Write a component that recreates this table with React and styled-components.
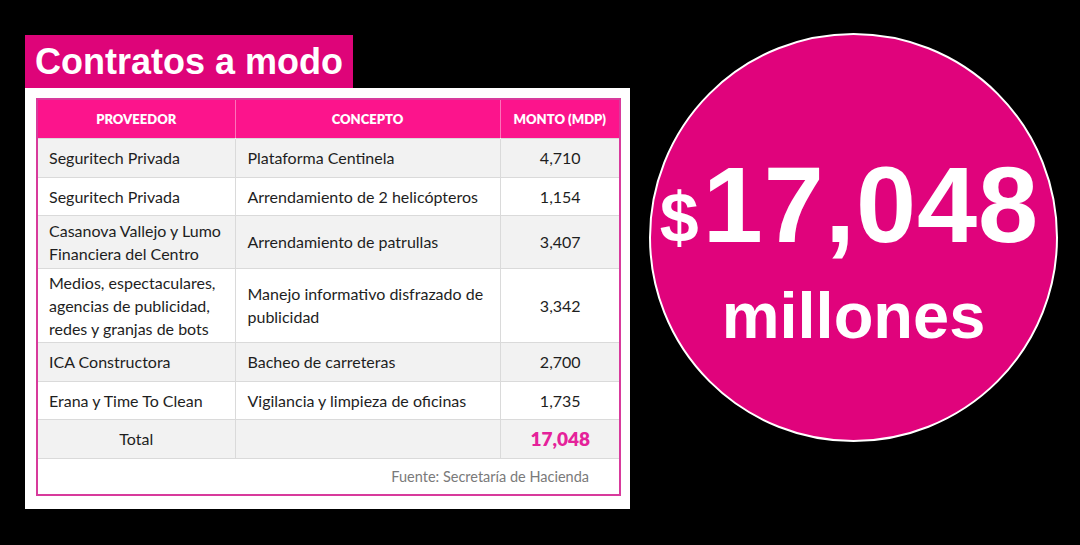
import React from 'react';
import styled, { createGlobalStyle } from 'styled-components';

const Global = createGlobalStyle`
  html, body { margin: 0; padding: 0; background: #000; }
  body { width: 1080px; height: 545px; overflow: hidden; }
`;

const Page = styled.div`
  display: flex;
  align-items: flex-start;
  gap: 19px;
  width: 1080px;
  height: 545px;
  box-sizing: border-box;
  padding: 33px 0 0 25px;
  background: #000;
`;

const LeftCol = styled.div`
  display: flex;
  flex-direction: column;
  align-items: flex-start;
  margin-top: 2px;
`;

const Title = styled.h1`
  margin: 0;
  height: 53px;
  padding: 1px 10px 0;
  box-sizing: border-box;
  background: #de0479;
  color: #fff;
  font: bold 36px/52px "Liberation Sans", Arial, sans-serif;
`;

const Card = styled.div`
  width: 605px;
  box-sizing: border-box;
  padding: 10px 9px 13px 11px;
  background: #fff;
`;

const Frame = styled.div`
  width: 585px;
  box-sizing: border-box;
  border: 2px solid #d83a9c;
`;

const Table = styled.table`
  width: 100%;
  border-collapse: collapse;
  table-layout: fixed;
  font-family: Lato, "Open Sans", sans-serif;
  font-size: 16px;
  color: #1e1e1e;
`;

const Row = styled.tr`
  height: ${(p) => p.h}px;
  background: ${(p) => (p.shade ? '#f2f2f2' : '#fff')};
`;

const Head = styled.th`
  background: #fc148c;
  color: #fff;
  font-weight: 800;
  font-size: 13px;
  text-align: center;
  padding: 0 6px;
  border-right: 1px solid rgba(255, 255, 255, 0.4);
  &:last-child { border-right: none; }
`;

const Cell = styled.td`
  padding: 2px 11px 2px 12px;
  line-height: 23px;
  white-space: nowrap;
  text-align: ${(p) => p.align || 'left'};
  vertical-align: middle;
  border: 1px solid #dadada;
  &:first-child { border-left: none; padding-left: 11px; }
  &:last-child { border-right: none; }
`;

const TotalValue = styled.span`
  color: #e5229a;
  font-weight: 800;
  font-size: 19px;
`;

const Source = styled.td`
  padding: 0 30px 0 0;
  text-align: right;
  color: #7a7a7a;
  font-size: 14.5px;
  border-top: 1px solid #dadada;
`;

const Circle = styled.div`
  width: 409px;
  height: 409px;
  box-sizing: border-box;
  border-radius: 50%;
  border: 2px solid #fff;
  background: #e0037c;
  color: #fff;
  display: flex;
  flex-direction: column;
  align-items: center;
  padding-top: 116px;
  font-family: "Liberation Sans", Arial, sans-serif;
  font-weight: bold;
`;

const Amount = styled.div`
  font-size: 108px;
  line-height: 1;
  letter-spacing: 1px;
  white-space: nowrap;
  margin-left: -8px;
`;

const Dollar = styled.span`
  font-size: 70px;
  margin-right: 3px;
`;

const Unit = styled.div`
  margin-top: 24px;
  font-size: 65px;
  line-height: 1;
`;

const rows = [
  { p: ['Seguritech Privada'], c: ['Plataforma Centinela'], m: '4,710', h: 39 },
  { p: ['Seguritech Privada'], c: ['Arrendamiento de 2 helicópteros'], m: '1,154', h: 38 },
  { p: ['Casanova Vallejo y Lumo', 'Financiera del Centro'], c: ['Arrendamiento de patrullas'], m: '3,407', h: 53 },
  {
    p: ['Medios, espectaculares,', 'agencias de publicidad,', 'redes y granjas de bots'],
    c: ['Manejo informativo disfrazado de', 'publicidad'],
    m: '3,342',
    h: 73,
  },
  { p: ['ICA Constructora'], c: ['Bacheo de carreteras'], m: '2,700', h: 39 },
  { p: ['Erana y Time To Clean'], c: ['Vigilancia y limpieza de oficinas'], m: '1,735', h: 38 },
];

const Lines = ({ items }) =>
  items.map((t, i) => (
    <React.Fragment key={i}>
      {i > 0 && <br />}
      {t}
    </React.Fragment>
  ));

export default function App() {
  return (
    <>
      <Global />
      <Page>
        <LeftCol>
          <Title>Contratos a modo</Title>
          <Card>
            <Frame>
              <Table>
                <colgroup>
                  <col style={{ width: 197 }} />
                  <col style={{ width: 265 }} />
                  <col style={{ width: 119 }} />
                </colgroup>
                <thead>
                  <Row h={38}>
                    <Head>PROVEEDOR</Head>
                    <Head>CONCEPTO</Head>
                    <Head>MONTO (MDP)</Head>
                  </Row>
                </thead>
                <tbody>
                  {rows.map((r, i) => (
                    <Row key={i} h={r.h} shade={i % 2 === 0}>
                      <Cell><Lines items={r.p} /></Cell>
                      <Cell><Lines items={r.c} /></Cell>
                      <Cell align="center">{r.m}</Cell>
                    </Row>
                  ))}
                  <Row h={39} shade>
                    <Cell align="center">Total</Cell>
                    <Cell />
                    <Cell align="center"><TotalValue>17,048</TotalValue></Cell>
                  </Row>
                  <Row h={36}>
                    <Source colSpan={3}>Fuente: Secretaría de Hacienda</Source>
                  </Row>
                </tbody>
              </Table>
            </Frame>
          </Card>
        </LeftCol>
        <Circle>
          <Amount><Dollar>$</Dollar>17,048</Amount>
          <Unit>millones</Unit>
        </Circle>
      </Page>
    </>
  );
}
